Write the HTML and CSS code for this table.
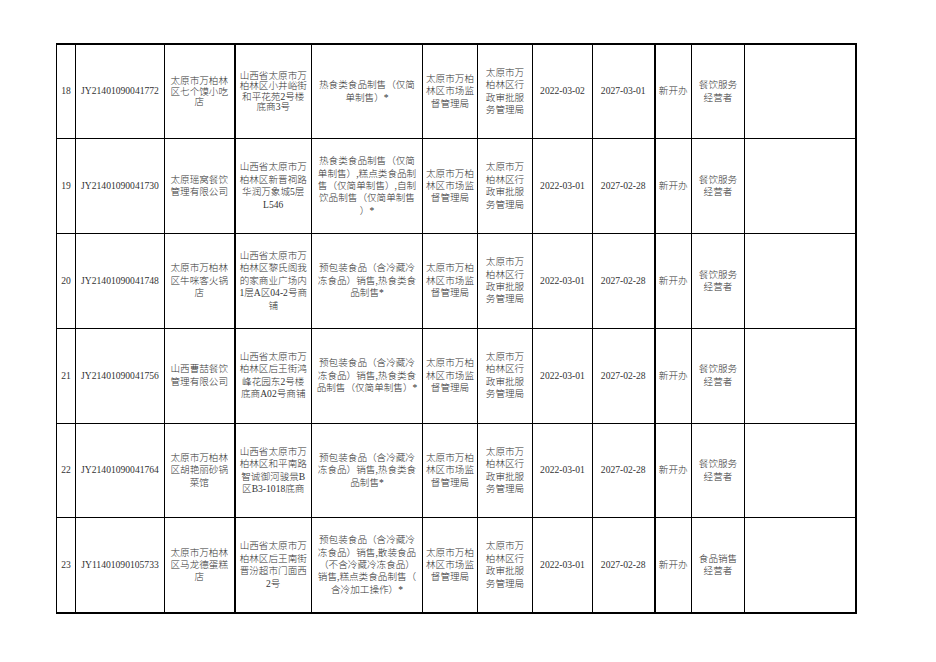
FILE: index.html
```html
<!DOCTYPE html>
<html lang="zh-CN">
<head>
<meta charset="utf-8">
<title>许可公示</title>
<link rel="stylesheet" href="styles.css">
</head>
<body>
<table class="sheet">
  <colgroup>
    <col class="c-no"><col class="c-id"><col class="c-name"><col class="c-addr"><col class="c-scope"><col class="c-org"><col class="c-appr"><col class="c-d1"><col class="c-d2"><col class="c-type"><col class="c-kind"><col class="c-note">
  </colgroup>
  <tbody>
    <tr>
      <td>18</td>
      <td>JY21401090041772</td>
      <td class="tight">太原市万柏林<br>区七个馍小吃<br>店</td>
      <td class="thick tight">山西省太原市万<br>柏林区小井峪街<br>和平花苑2号楼<br>底商3号</td>
      <td>热食类食品制售（仅简<br>单制售）*</td>
      <td>太原市万柏<br>林区市场监<br>督管理局</td>
      <td>太原市万<br>柏林区行<br>政审批服<br>务管理局</td>
      <td>2022-03-02</td>
      <td>2027-03-01</td>
      <td class="thick">新开办</td>
      <td>餐饮服务<br>经营者</td>
      <td></td>
    </tr>
    <tr>
      <td>19</td>
      <td>JY21401090041730</td>
      <td>太原瑶窝餐饮<br>管理有限公司</td>
      <td class="thick">山西省太原市万<br>柏林区新晋祠路<br>华润万象城5层<br>L546</td>
      <td>热食类食品制售（仅简<br>单制售）,糕点类食品制<br>售（仅简单制售）,自制<br>饮品制售（仅简单制售<br>）*</td>
      <td>太原市万柏<br>林区市场监<br>督管理局</td>
      <td>太原市万<br>柏林区行<br>政审批服<br>务管理局</td>
      <td>2022-03-01</td>
      <td>2027-02-28</td>
      <td class="thick">新开办</td>
      <td>餐饮服务<br>经营者</td>
      <td></td>
    </tr>
    <tr>
      <td>20</td>
      <td>JY21401090041748</td>
      <td>太原市万柏林<br>区牛咪客火锅<br>店</td>
      <td class="thick">山西省太原市万<br>柏林区黎氏阁我<br>的家商业广场内<br>1层A区04-2号商<br>铺</td>
      <td>预包装食品（含冷藏冷<br>冻食品）销售,热食类食<br>品制售*</td>
      <td>太原市万柏<br>林区市场监<br>督管理局</td>
      <td>太原市万<br>柏林区行<br>政审批服<br>务管理局</td>
      <td>2022-03-01</td>
      <td>2027-02-28</td>
      <td class="thick">新开办</td>
      <td>餐饮服务<br>经营者</td>
      <td></td>
    </tr>
    <tr>
      <td>21</td>
      <td>JY21401090041756</td>
      <td>山西曹喆餐饮<br>管理有限公司</td>
      <td class="thick">山西省太原市万<br>柏林区后王街鸿<br>峰花园东2号楼<br>底商A02号商铺</td>
      <td>预包装食品（含冷藏冷<br>冻食品）销售,热食类食<br>品制售（仅简单制售）*</td>
      <td>太原市万柏<br>林区市场监<br>督管理局</td>
      <td>太原市万<br>柏林区行<br>政审批服<br>务管理局</td>
      <td>2022-03-01</td>
      <td>2027-02-28</td>
      <td class="thick">新开办</td>
      <td>餐饮服务<br>经营者</td>
      <td></td>
    </tr>
    <tr>
      <td>22</td>
      <td>JY21401090041764</td>
      <td>太原市万柏林<br>区胡艳丽砂锅<br>菜馆</td>
      <td class="thick">山西省太原市万<br>柏林区和平南路<br>智诚御河骏景B<br>区B3-1018底商</td>
      <td>预包装食品（含冷藏冷<br>冻食品）销售,热食类食<br>品制售*</td>
      <td>太原市万柏<br>林区市场监<br>督管理局</td>
      <td>太原市万<br>柏林区行<br>政审批服<br>务管理局</td>
      <td>2022-03-01</td>
      <td>2027-02-28</td>
      <td class="thick">新开办</td>
      <td>餐饮服务<br>经营者</td>
      <td></td>
    </tr>
    <tr>
      <td>23</td>
      <td>JY11401090105733</td>
      <td>太原市万柏林<br>区马龙德蛋糕<br>店</td>
      <td class="thick">山西省太原市万<br>柏林区后王南街<br>晋汾超市门面西<br>2号</td>
      <td>预包装食品（含冷藏冷<br>冻食品）销售,散装食品<br>（不含冷藏冷冻食品）<br>销售,糕点类食品制售（<br>含冷加工操作）*</td>
      <td>太原市万柏<br>林区市场监<br>督管理局</td>
      <td>太原市万<br>柏林区行<br>政审批服<br>务管理局</td>
      <td>2022-03-01</td>
      <td>2027-02-28</td>
      <td class="thick">新开办</td>
      <td>食品销售<br>经营者</td>
      <td></td>
    </tr>
  </tbody>
</table>
</body>
</html>
```
FILE: styles.css
```css
html, body {
  margin: 0;
  padding: 0;
  background: #fff;
}
body {
  font-family: "Liberation Serif", "Noto Sans CJK SC", serif;
  font-size: 9.6px;
  font-weight: 300;
  color: #333;
}
.sheet {
  margin: 43px 0 0 56px;
  border-collapse: collapse;
  table-layout: fixed;
  width: 800px;
  border-top: 2px solid #000;
  border-bottom: 2px solid #000;
  border-right: 2px solid #000;
  border-left: 1px solid #000;
}
.c-no { width: 19px; }
.c-id { width: 89px; }
.c-name { width: 70px; }
.c-addr { width: 77px; }
.c-scope { width: 111px; }
.c-org { width: 55px; }
.c-appr { width: 55px; }
.c-d1 { width: 60px; }
.c-d2 { width: 62px; }
.c-type { width: 37px; }
.c-kind { width: 53px; }
.c-note { width: 111px; }
.sheet tr {
  height: 94.8px;
}
.sheet td {
  border: 1px solid #000;
  padding: 0;
  text-align: center;
  vertical-align: middle;
  line-height: 12.4px;
  white-space: nowrap;
  overflow: hidden;
}
.sheet td.thick {
  border-left: 2px solid #000;
}
.sheet td.tight {
  line-height: 10.3px;
}
```
